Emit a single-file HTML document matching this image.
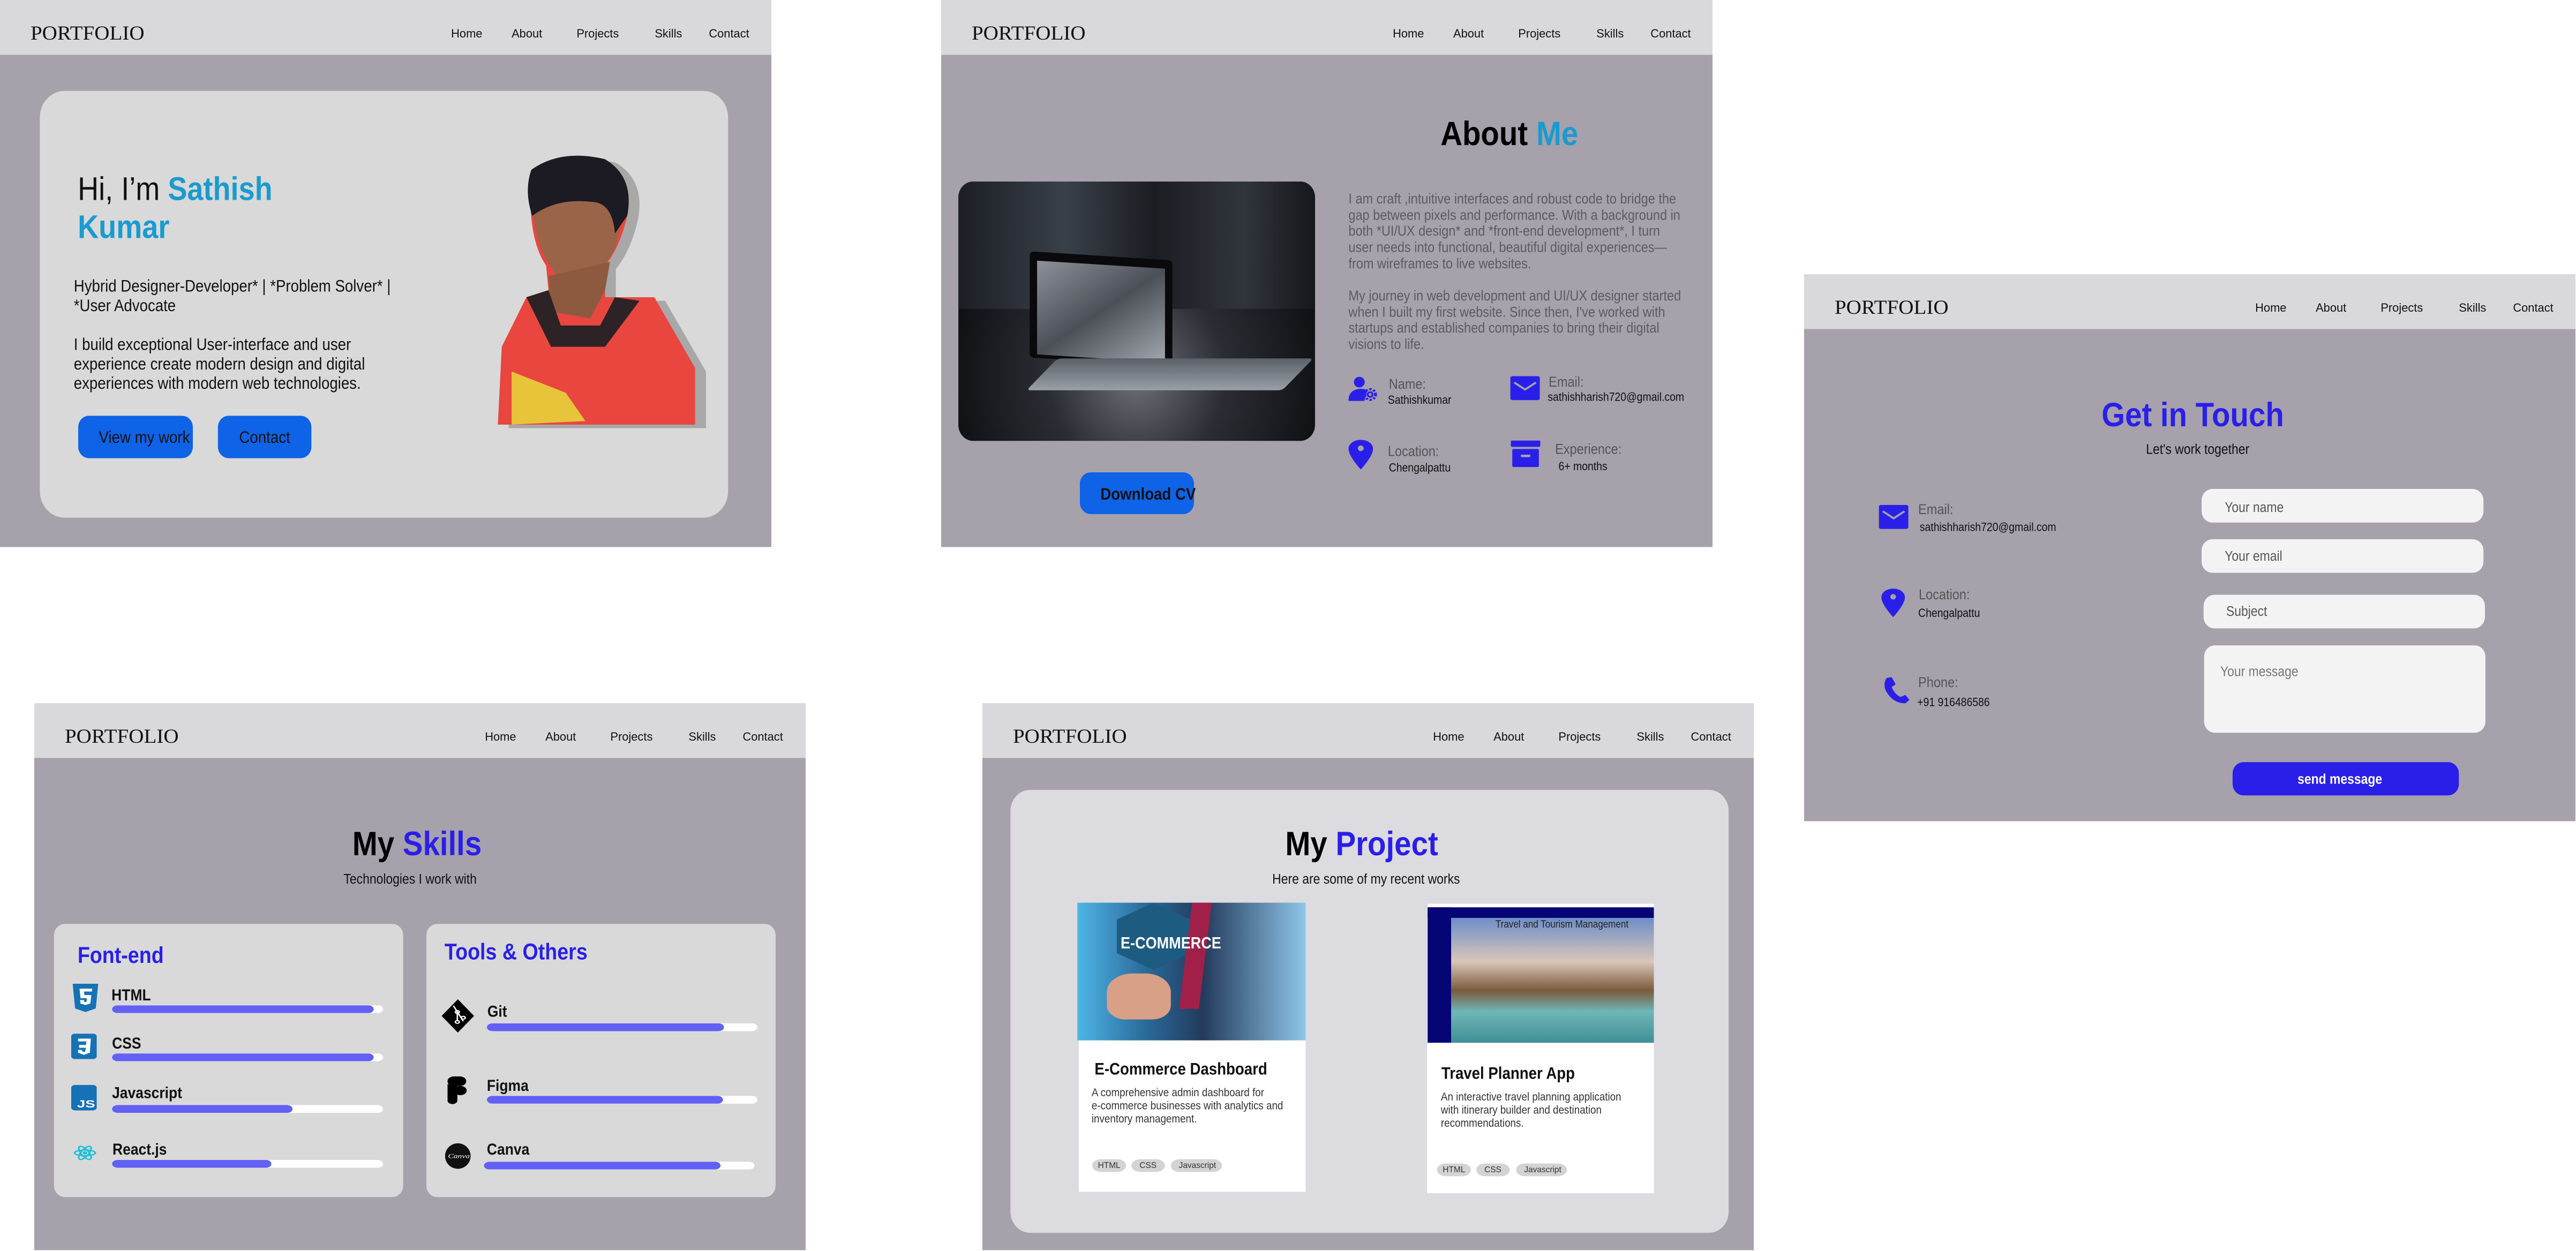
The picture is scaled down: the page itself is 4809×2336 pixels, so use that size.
<!DOCTYPE html>
<html><head><meta charset="utf-8"><style>
*{margin:0;padding:0;box-sizing:border-box}
body{width:4809px;height:2336px;background:#fff;position:relative;overflow:hidden;font-family:"Liberation Sans",sans-serif}
.f{position:absolute;width:1568px;height:1546px;transform:scale(0.91837,0.6607);transform-origin:0 0;background:#a6a1ab;overflow:hidden}
.nav{position:absolute;left:0;top:0;width:100%;height:155px;background:#d9d9db}
.logo{position:absolute;left:62px;top:62px;font-family:"Liberation Serif",serif;font-size:56px;color:#111;transform:scaleX(.76);transform-origin:0 0;white-space:nowrap}
.ni{position:absolute;top:76px;font-size:34px;color:#111;transform:scaleX(.7);transform-origin:0 0;white-space:nowrap}
.t{position:absolute;white-space:nowrap;line-height:1;transform:scaleX(.64);transform-origin:0 0}
.c{transform-origin:50% 0}
.b{position:absolute;border-radius:22px}
.blue{color:#2a1fe8}.cy{color:#1a9bd0}
.bar{position:absolute;height:22px;background:#fff;border-radius:11px;overflow:hidden}
.bar i{display:block;height:100%;background:#6260f5;border-radius:11px}
.tag{position:absolute;height:36px;background:#d3d3d3;border-radius:18px;font-size:24px;color:#333;text-align:center;line-height:36px}
.tag span{display:inline-block;transform:scaleX(.7)}
</style></head><body>

<!-- FRAME 1 HERO -->
<div class="f" style="left:0;top:0">
 <div class="nav"><div class="logo">PORTFOLIO</div>
 <div class="ni" style="left:917px">Home</div><div class="ni" style="left:1040px">About</div><div class="ni" style="left:1172px">Projects</div><div class="ni" style="left:1331px">Skills</div><div class="ni" style="left:1441px">Contact</div></div>
 <div class="b" style="left:81px;top:257px;width:1399px;height:1206px;background:#d9d9d9;border-radius:50px/75px"></div>
 <div class="t" style="left:158px;top:488px;font-size:92px;color:#111">Hi, I’m <b class="cy">Sathish</b></div>
 <div class="t cy" style="left:158px;top:596px;font-size:92px;font-weight:bold">Kumar</div>
 <div class="t" style="left:150px;top:780px;font-size:47px;color:#111;line-height:55px">Hybrid Designer-Developer* | *Problem Solver* |<br>*User Advocate</div>
 <div class="t" style="left:150px;top:945px;font-size:47px;color:#111;line-height:55px">I build exceptional User-interface and user<br>experience create modern design and digital<br>experiences with modern web technologies.</div>
 <div class="b" style="left:159px;top:1175px;width:233px;height:120px;background:#0e63e6;border-radius:22px/32px"></div>
 <div class="t c" style="left:159px;top:1212px;width:233px;text-align:center;font-size:47px;color:#111">View my work</div>
 <div class="b" style="left:443px;top:1175px;width:190px;height:120px;background:#0e63e6;border-radius:22px/32px"></div>
 <div class="t c" style="left:443px;top:1212px;width:190px;text-align:center;font-size:47px;color:#111">Contact</div>
 <svg style="position:absolute;left:1000px;top:420px" width="450" height="800" viewBox="0 0 450 800">
  <g transform="translate(22,10)" fill="#a8a8a8"><path d="M80 60 Q140 0 230 30 Q290 80 275 190 Q260 280 230 330 L230 420 L330 420 L413 620 L413 780 L12 780 L20 560 L70 420 L115 400 L110 330 Q70 250 80 60Z"/></g>
  <path d="M80 60 Q140 0 230 30 Q290 80 275 190 Q260 280 230 330 L230 420 L330 420 L413 620 L413 780 L12 780 L20 560 L70 420 L115 400 L110 330 Q70 250 80 60Z" fill="#e8463f"/>
  <path d="M80 140 Q90 320 150 380 Q230 370 255 260 Q270 150 240 120 Q160 110 80 140Z" fill="#9a6448"/>
  <path d="M115 360 L120 460 L200 480 L230 400 L240 320 Z" fill="#8d5a40"/>
  <path d="M80 60 Q140 0 230 30 Q290 80 275 190 L250 240 Q245 150 200 150 Q130 140 82 190 Q65 120 80 60Z" fill="#1c1a22"/>
  <path d="M70 420 L115 400 L140 500 L220 500 L250 420 L300 430 L230 560 L120 560Z" fill="#2d2226"/>
  <path d="M40 630 L150 690 L190 770 L40 780Z" fill="#e7c43a"/>
 </svg>
</div>

<!-- FRAME 2 ABOUT -->
<div class="f" style="left:1757px;top:0">
 <div class="nav"><div class="logo">PORTFOLIO</div>
 <div class="ni" style="left:918px">Home</div><div class="ni" style="left:1041px">About</div><div class="ni" style="left:1173px">Projects</div><div class="ni" style="left:1332px">Skills</div><div class="ni" style="left:1442px">Contact</div></div>
 <div class="t c" style="left:0;width:2310px;text-align:center;top:330px;font-size:96px;font-weight:bold;color:#000">About <span class="cy">Me</span></div>
 <div class="b" style="left:35px;top:513px;width:725px;height:733px;border-radius:30px/45px;overflow:hidden;background:radial-gradient(ellipse at 50% 75%,#6d7178 0%,#2a2d33 35%,#0e1014 75%)">
  <div style="position:absolute;left:0;top:0;width:100%;height:360px;background:linear-gradient(90deg,#1b1f25,#3a4048 30%,#1a1d22 55%,#30353c 80%,#15181c)"></div>
  <div style="position:absolute;left:145px;top:210px;width:290px;height:300px;background:#0a0a0c;transform:skewY(5deg);border-radius:10px"></div>
  <div style="position:absolute;left:160px;top:235px;width:260px;height:265px;background:linear-gradient(135deg,#8d9299,#4b5057 50%,#a3a8ae);transform:skewY(5deg)"></div>
  <div style="position:absolute;left:170px;top:500px;width:520px;height:90px;background:linear-gradient(180deg,#5b6068,#9aa0a7);transform:skewX(-35deg);border-radius:8px"></div>
 </div>
 <div class="t" style="left:828px;top:540px;font-size:40px;color:#5e5a63;line-height:45.7px">I am craft ,intuitive interfaces and robust code to bridge the<br>gap between pixels and performance. With a background in<br>both *UI/UX design* and *front-end development*, I turn<br>user needs into functional, beautiful digital experiences—<br>from wireframes to live websites.</div>
 <div class="t" style="left:828px;top:814px;font-size:40px;color:#5e5a63;line-height:45.7px">My journey in web development and UI/UX designer started<br>when I built my first website. Since then, I've worked with<br>startups and established companies to bring their digital<br>visions to life.</div>
 <svg style="position:absolute;left:826px;top:1063px" width="62" height="75" viewBox="0 0 62 75"><ellipse cx="24" cy="17" rx="11" ry="15" fill="#2a1fe8"/><path d="M2 70 Q2 38 26 36 Q38 36 40 42 L34 70Z" fill="#2a1fe8"/><ellipse cx="46" cy="52" rx="11" ry="15" fill="none" stroke="#2a1fe8" stroke-width="6" stroke-dasharray="5 3.5"/><ellipse cx="46" cy="52" rx="7" ry="9" fill="#2a1fe8"/><ellipse cx="46" cy="52" rx="3" ry="4" fill="#a6a1ab"/></svg>
 <div class="t" style="left:910px;top:1066px;font-size:40px;color:#555">Name:</div>
 <div class="t" style="left:908px;top:1113px;font-size:33px;color:#111">Sathishkumar</div>
 <svg style="position:absolute;left:1157px;top:1063px" width="60" height="68"><rect width="60" height="68" rx="5" fill="#2a1fe8"/><path d="M8 18 L30 38 L52 18" stroke="#a6a1ab" stroke-width="5" fill="none"/></svg>
 <div class="t" style="left:1235px;top:1060px;font-size:40px;color:#555">Email:</div>
 <div class="t" style="left:1233px;top:1105px;font-size:33px;color:#111">sathishharish720@gmail.com</div>
 <svg style="position:absolute;left:828px;top:1243px" width="50" height="84" viewBox="0 0 50 84"><path d="M25 84 Q0 45 0 25 A25 25 0 0 1 50 25 Q50 45 25 84Z" fill="#2a1fe8"/><ellipse cx="25" cy="24" rx="6" ry="8" fill="#a6a1ab"/></svg>
 <div class="t" style="left:908px;top:1256px;font-size:40px;color:#555">Location:</div>
 <div class="t" style="left:910px;top:1305px;font-size:33px;color:#111">Chengalpattu</div>
 <svg style="position:absolute;left:1158px;top:1245px" width="60" height="75"><rect width="60" height="18" rx="3" fill="#2a1fe8"/><rect x="3" y="24" width="54" height="51" rx="3" fill="#2a1fe8"/><rect x="20" y="40" width="20" height="7" rx="3" fill="#a6a1ab"/></svg>
 <div class="t" style="left:1248px;top:1250px;font-size:40px;color:#555">Experience:</div>
 <div class="t" style="left:1255px;top:1301px;font-size:33px;color:#111">6+ months</div>
 <div class="b" style="left:282px;top:1335px;width:232px;height:118px;background:#0e63e6;border-radius:22px/32px"></div>
 <div class="t c" style="left:282px;top:1372px;width:232px;text-align:center;font-size:47px;font-weight:bold;color:#111">Download CV</div>
</div>

<!-- FRAME 3 CONTACT -->
<div class="f" style="left:3368px;top:512px">
 <div class="nav"><div class="logo">PORTFOLIO</div>
 <div class="ni" style="left:917px">Home</div><div class="ni" style="left:1040px">About</div><div class="ni" style="left:1172px">Projects</div><div class="ni" style="left:1331px">Skills</div><div class="ni" style="left:1441px">Contact</div></div>
 <div class="t blue c" style="left:0;width:1580px;text-align:center;top:350px;font-size:96px;font-weight:bold">Get in Touch</div>
 <div class="t c" style="left:0;width:1600px;text-align:center;top:476px;font-size:39px;color:#111">Let's work together</div>
 <svg style="position:absolute;left:152px;top:652px" width="60" height="68"><rect width="60" height="68" rx="5" fill="#2a1fe8"/><path d="M8 18 L30 38 L52 18" stroke="#a6a1ab" stroke-width="5" fill="none"/></svg>
 <div class="t" style="left:232px;top:645px;font-size:40px;color:#555">Email:</div>
 <div class="t" style="left:235px;top:698px;font-size:33px;color:#111">sathishharish720@gmail.com</div>
 <svg style="position:absolute;left:157px;top:888px" width="48" height="82" viewBox="0 0 50 84"><path d="M25 84 Q0 45 0 25 A25 25 0 0 1 50 25 Q50 45 25 84Z" fill="#2a1fe8"/><ellipse cx="25" cy="24" rx="6" ry="8" fill="#a6a1ab"/></svg>
 <div class="t" style="left:233px;top:886px;font-size:40px;color:#555">Location:</div>
 <div class="t" style="left:232px;top:941px;font-size:33px;color:#111">Chengalpattu</div>
 <svg style="position:absolute;left:160px;top:1137px" width="54" height="78" viewBox="0 0 54 78"><path d="M8 4 L18 2 L26 22 L18 30 Q24 50 36 58 L46 52 L54 66 L46 76 Q20 76 6 40 Q0 20 8 4Z" fill="#2a1fe8"/></svg>
 <div class="t" style="left:232px;top:1134px;font-size:40px;color:#555">Phone:</div>
 <div class="t" style="left:230px;top:1193px;font-size:33px;color:#111">+91 916486586</div>
 <div class="b" style="left:808px;top:607px;width:573px;height:95px;background:#f4f3f4;border-radius:22px/32px"></div>
 <div class="t" style="left:855px;top:640px;font-size:39px;color:#555">Your name</div>
 <div class="b" style="left:808px;top:749px;width:573px;height:95px;background:#f4f3f4;border-radius:22px/32px"></div>
 <div class="t" style="left:855px;top:778px;font-size:39px;color:#555">Your email</div>
 <div class="b" style="left:812px;top:906px;width:572px;height:95px;background:#f4f3f4;border-radius:22px/32px"></div>
 <div class="t" style="left:858px;top:934px;font-size:39px;color:#555">Subject</div>
 <div class="b" style="left:813px;top:1049px;width:572px;height:247px;background:#f4f3f4;border-radius:22px/32px"></div>
 <div class="t" style="left:846px;top:1104px;font-size:39px;color:#777">Your message</div>
 <div class="b" style="left:871px;top:1379px;width:460px;height:94px;background:#2a1fe8;border-radius:22px/32px"></div>
 <div class="t c" style="left:871px;top:1408px;width:436px;text-align:center;font-size:39px;font-weight:bold;color:#fff">send message</div>
</div>

<!-- FRAME 4 SKILLS -->
<div class="f" style="left:64px;top:1313px">
 <div class="nav"><div class="logo">PORTFOLIO</div>
 <div class="ni" style="left:916px">Home</div><div class="ni" style="left:1039px">About</div><div class="ni" style="left:1171px">Projects</div><div class="ni" style="left:1330px">Skills</div><div class="ni" style="left:1440px">Contact</div></div>
 <div class="t c" style="left:0;width:1556px;text-align:center;top:350px;font-size:96px;font-weight:bold;color:#000">My <span class="blue">Skills</span></div>
 <div class="t c" style="left:0;width:1528px;text-align:center;top:478px;font-size:39px;color:#111">Technologies I work with</div>
 <div class="b" style="left:40px;top:624px;width:710px;height:772px;background:#d9d9d9;border-radius:22px/32px"></div>
 <div class="b" style="left:797px;top:624px;width:710px;height:772px;background:#d9d9d9;border-radius:22px/32px"></div>
 <div class="t blue" style="left:88px;top:680px;font-size:64px;font-weight:bold">Font-end</div>
 <svg style="position:absolute;left:78px;top:793px" width="52" height="80" viewBox="0 0 52 80"><path d="M0 0 H52 L47 70 L26 80 L5 70Z" fill="#1572b6"/><path d="M14 14 H40 L39 22 H23 L24 32 H38 L36 56 L26 60 L16 56 L15 46 H23 L23 51 L28 52 L29 41 H16Z" fill="#fff"/></svg>
 <div class="t" style="left:157px;top:802px;font-size:45px;font-weight:bold;color:#111">HTML</div>
 <div class="bar" style="left:158px;top:854px;width:551px"><i style="width:532px"></i></div>
 <svg style="position:absolute;left:75px;top:934px" width="52" height="72" viewBox="0 0 52 72"><rect width="52" height="72" rx="8" fill="#1572b6"/><path d="M14 14 H40 L38 54 L26 60 L14 54 L14 46 H22 L22 50 L28 52 L30 40 H16 V32 H30 L31 22 H14Z" fill="#fff"/></svg>
 <div class="t" style="left:158px;top:938px;font-size:45px;font-weight:bold;color:#111">CSS</div>
 <div class="bar" style="left:158px;top:990px;width:551px"><i style="width:532px"></i></div>
 <svg style="position:absolute;left:75px;top:1079px" width="52" height="72"><rect width="52" height="72" rx="8" fill="#1572b6"/><text x="12" y="64" font-family="Liberation Sans" font-weight="bold" font-size="30" fill="#fff">JS</text></svg>
 <div class="t" style="left:158px;top:1078px;font-size:45px;font-weight:bold;color:#111">Javascript</div>
 <div class="bar" style="left:158px;top:1136px;width:551px"><i style="width:367px"></i></div>
 <svg style="position:absolute;left:80px;top:1242px" width="46" height="58" viewBox="0 0 46 58"><g fill="none" stroke="#1ec0d8" stroke-width="3.5"><ellipse cx="23" cy="29" rx="21" ry="8"/><ellipse cx="23" cy="29" rx="21" ry="8" transform="rotate(60 23 29)"/><ellipse cx="23" cy="29" rx="21" ry="8" transform="rotate(-60 23 29)"/></g><circle cx="23" cy="29" r="4.5" fill="#1ec0d8"/></svg>
 <div class="t" style="left:159px;top:1238px;font-size:45px;font-weight:bold;color:#111">React.js</div>
 <div class="bar" style="left:158px;top:1291px;width:551px"><i style="width:324px"></i></div>
 <div class="t blue" style="left:834px;top:670px;font-size:64px;font-weight:bold">Tools &amp; Others</div>
 <svg style="position:absolute;left:828px;top:837px" width="66" height="94" viewBox="0 0 66 94"><path d="M33 0 L66 47 L33 94 L0 47Z" fill="#000"/><g stroke="#fff" stroke-width="3" fill="none"><path d="M24 18 L44 62 M32 36 L32 62"/><circle cx="32" cy="36" r="4"/><circle cx="32" cy="64" r="4"/><circle cx="44" cy="52" r="4"/></g></svg>
 <div class="t" style="left:921px;top:848px;font-size:45px;font-weight:bold;color:#111">Git</div>
 <div class="bar" style="left:920px;top:905px;width:550px"><i style="width:482px"></i></div>
 <svg style="position:absolute;left:840px;top:1055px" width="40" height="82" viewBox="0 0 40 82"><rect x="0" y="0" width="38" height="27" rx="13" fill="#000"/><rect x="0" y="27" width="20" height="27" rx="10" fill="#000"/><circle cx="26" cy="40" r="13" fill="#000"/><path d="M0 54 H20 V68 A10 10 0 0 1 0 68Z" fill="#000"/><rect x="0" y="22" width="20" height="34" fill="#000"/></svg>
 <div class="t" style="left:920px;top:1058px;font-size:45px;font-weight:bold;color:#111">Figma</div>
 <div class="bar" style="left:920px;top:1110px;width:550px"><i style="width:480px"></i></div>
 <svg style="position:absolute;left:835px;top:1244px" width="52" height="72"><ellipse cx="26" cy="36" rx="26" ry="36" fill="#111"/><text x="6" y="42" font-family="Liberation Serif" font-style="italic" font-size="17" fill="#fff">Canva</text></svg>
 <div class="t" style="left:920px;top:1238px;font-size:45px;font-weight:bold;color:#111">Canva</div>
 <div class="bar" style="left:914px;top:1296px;width:550px"><i style="width:481px"></i></div>
</div>

<!-- FRAME 5 PROJECTS -->
<div class="f" style="left:1834px;top:1313px">
 <div class="nav"><div class="logo">PORTFOLIO</div>
 <div class="ni" style="left:916px">Home</div><div class="ni" style="left:1039px">About</div><div class="ni" style="left:1171px">Projects</div><div class="ni" style="left:1330px">Skills</div><div class="ni" style="left:1440px">Contact</div></div>
 <div class="b" style="left:57px;top:245px;width:1460px;height:1252px;background:#dcdbdf;border-radius:40px/60px"></div>
 <div class="t c" style="left:0;width:1542px;text-align:center;top:350px;font-size:96px;font-weight:bold;color:#000">My <span class="blue">Project</span></div>
 <div class="t c" style="left:0;width:1560px;text-align:center;top:478px;font-size:39px;color:#111">Here are some of my recent works</div>
 <div style="position:absolute;left:196px;top:953px;width:461px;height:428px;background:#fff"></div>
 <div style="position:absolute;left:193px;top:564px;width:464px;height:389px;background:linear-gradient(90deg,#4fb5e6 0%,#2a6a9a 30%,#233a5c 55%,#8fc6e8 100%);overflow:hidden">
  <div style="position:absolute;left:80px;top:0;width:150px;height:190px;background:#1d5c80;clip-path:polygon(50% 0,100% 25%,100% 75%,50% 100%,0 75%,0 25%)"></div>
  <div style="position:absolute;left:220px;top:0;width:40px;height:300px;background:#a0204a;transform:skewX(-5deg)"></div>
  <div class="t" style="left:88px;top:90px;font-size:46px;color:#fff;font-weight:bold">E-COMMERCE</div>
  <div style="position:absolute;left:60px;top:200px;width:130px;height:130px;background:#d9a088;border-radius:40% 40% 30% 30%"></div>
 </div>
 <div class="t" style="left:228px;top:1010px;font-size:47px;font-weight:bold;color:#111">E-Commerce Dashboard</div>
 <div class="t" style="left:222px;top:1082px;font-size:32px;color:#333;line-height:37px">A comprehensive admin dashboard for<br>e-commerce businesses with analytics and<br>inventory management.</div>
 <div class="tag" style="left:223px;top:1289px;width:69px"><span>HTML</span></div>
 <div class="tag" style="left:303px;top:1289px;width:68px"><span>CSS</span></div>
 <div class="tag" style="left:383px;top:1289px;width:104px"><span>Javascript</span></div>
 <div style="position:absolute;left:904px;top:960px;width:461px;height:425px;background:#fff"></div>
 <div style="position:absolute;left:905px;top:567px;width:460px;height:393px;background:#fff;overflow:hidden">
  <div style="position:absolute;left:0;top:10px;width:460px;height:30px;background:#050575"></div>
  <div style="position:absolute;left:0;top:10px;width:48px;height:383px;background:#050575"></div>
  <div style="position:absolute;left:48px;top:40px;width:412px;height:353px;background:linear-gradient(180deg,#6d8ec8 0%,#d9c6b8 35%,#7a5a3c 58%,#6fb6b8 75%,#3f8f95 100%)"></div>
  <div class="t" style="left:138px;top:44px;font-size:29px;color:#222">Travel and Tourism Management</div>
 </div>
 <div class="t" style="left:933px;top:1022px;font-size:47px;font-weight:bold;color:#111">Travel Planner App</div>
 <div class="t" style="left:932px;top:1094px;font-size:32px;color:#333;line-height:37px">An interactive travel planning application<br>with itinerary builder and destination<br>recommendations.</div>
 <div class="tag" style="left:924px;top:1301px;width:69px"><span>HTML</span></div>
 <div class="tag" style="left:1004px;top:1301px;width:68px"><span>CSS</span></div>
 <div class="tag" style="left:1085px;top:1301px;width:103px"><span>Javascript</span></div>
</div>

</body></html>
